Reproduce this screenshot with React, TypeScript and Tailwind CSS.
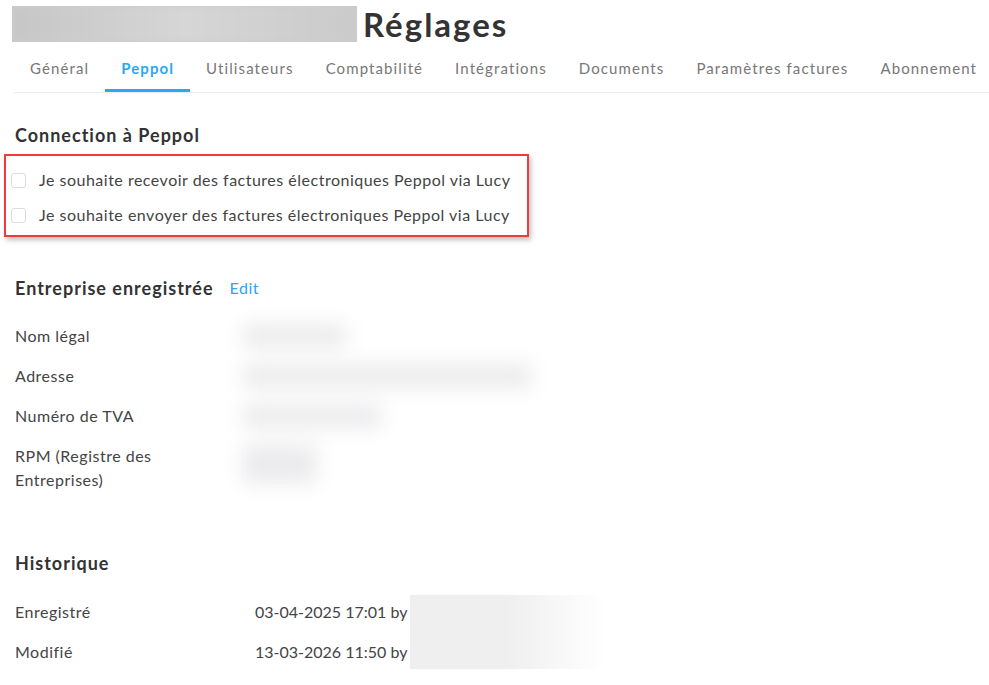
import { useState } from 'react';

const tabs = ['Général', 'Peppol', 'Utilisateurs', 'Comptabilité', 'Intégrations', 'Documents', 'Paramètres factures', 'Abonnement'];

function Redacted({ className }: { className: string }) {
  return <span className={`block rounded-lg bg-[#ebebed] blur-[10px] ${className}`} />;
}

export default function App() {
  const [active, setActive] = useState('Peppol');
  const [receive, setReceive] = useState(false);
  const [send, setSend] = useState(false);

  return (
    <div className="w-[989px] h-[685px] overflow-hidden bg-white font-['Lato',sans-serif] text-[#444] tracking-[0.5px]">
      {/* title */}
      <div className="flex items-center pl-[12px] pt-[6px]">
        <div className="w-[345px] h-[36px] overflow-hidden bg-[#cdcdcd]">
          <div className="w-full h-full bg-gradient-to-r from-[#c6c6c6] via-[#d6d6d6] to-[#cacaca] blur-[4px]" />
        </div>
        <h1 className="ml-[6px] text-[33px] leading-[36px] font-bold tracking-[2px] text-[#333]">Réglages</h1>
      </div>

      {/* tabs */}
      <div className="ml-[14px] mt-[2px] flex overflow-hidden border-b border-[#ececec]">
        {tabs.map(t => (
          <button
            key={t}
            onClick={() => setActive(t)}
            className={`relative shrink-0 whitespace-nowrap h-[48px] px-4 text-[15px] tracking-[1.1px] ${active === t ? 'font-bold text-[#2aa8f5]' : 'text-[#777]'}`}
          >
            {t}
            {active === t && <span className="absolute left-0 right-0 bottom-0 h-[3px] bg-[#2aa8f5]" />}
          </button>
        ))}
      </div>

      <div className="pl-[15px]">
        {/* Peppol connection */}
        <h2 className="mt-[30px] text-[18px] leading-[24px] font-bold tracking-[1px] text-[#333]">Connection à Peppol</h2>
        <div className="ml-[-11px] mt-[7px] w-[525px] border-2 border-[#ef3b3b] pl-[5px] pt-[12px] pb-[8px] shadow-[2px_3px_5px_rgba(0,0,0,0.25)]">
          <label className="flex items-center h-[24px] gap-[13px] text-[16px]">
            <input type="checkbox" checked={receive} onChange={e => setReceive(e.target.checked)} className="appearance-none w-[15px] h-[15px] rounded-[3px] border border-[#dcdcdc] bg-white" />
            Je souhaite recevoir des factures électroniques Peppol via Lucy
          </label>
          <label className="mt-[11px] flex items-center h-[24px] gap-[13px] text-[16px]">
            <input type="checkbox" checked={send} onChange={e => setSend(e.target.checked)} className="appearance-none w-[15px] h-[15px] rounded-[3px] border border-[#dcdcdc] bg-white" />
            Je souhaite envoyer des factures électroniques Peppol via Lucy
          </label>
        </div>

        {/* company */}
        <div className="mt-[39px] flex items-center gap-[16px]">
          <h2 className="text-[18px] leading-[24px] font-bold tracking-[1px] text-[#333]">Entreprise enregistrée</h2>
          <a className="text-[16px] text-[#2ea4f2] cursor-pointer">Edit</a>
        </div>
        <div className="mt-[24px] grid grid-cols-[227px_1fr] gap-y-[16px] text-[16px] leading-[24px]">
          <span>Nom légal</span>
          <Redacted className="w-[105px] h-[24px]" />
          <span>Adresse</span>
          <Redacted className="w-[290px] h-[24px]" />
          <span>Numéro de TVA</span>
          <Redacted className="w-[140px] h-[24px]" />
          <span className="max-w-[160px]">RPM (Registre des Entreprises)</span>
          <Redacted className="w-[75px] h-[40px]" />
        </div>

        {/* history */}
        <h2 className="mt-[59px] text-[18px] leading-[24px] font-bold tracking-[1px] text-[#333]">Historique</h2>
        <div className="mt-[25px] grid grid-cols-[240px_155px_1fr] gap-y-[16px] text-[16px] leading-[24px]">
          <span>Enregistré</span>
          <span className="whitespace-nowrap tracking-normal">03-04-2025 17:01 by</span>
          <div className="row-span-2 -my-[5px] w-[195px] bg-gradient-to-r from-[#efeff0] via-[#efeff0] to-white" />
          <span>Modifié</span>
          <span className="whitespace-nowrap tracking-normal">13-03-2026 11:50 by</span>
        </div>
      </div>
    </div>
  );
}
